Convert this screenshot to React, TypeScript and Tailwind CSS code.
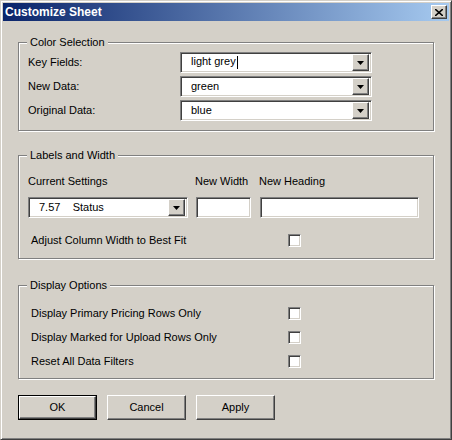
const font = { fontFamily: '"Liberation Sans", Arial, sans-serif' };

const sunken =
  "bg-white border border-t-[#808080] border-l-[#808080] border-b-white border-r-white shadow-[inset_1px_1px_0_#404040,inset_-1px_-1px_0_#d4d0c8]";
const raised =
  "bg-[#d4d0c8] border border-t-white border-l-white border-b-[#404040] border-r-[#404040] shadow-[inset_-1px_-1px_0_#808080]";

function Arrow() {
  return (
    <div className={`${raised} w-[17px] h-[17px] flex items-center justify-center shrink-0`}>
      <svg width="7" height="4" viewBox="0 0 7 4">
        <path d="M0 0h7L3.5 4z" fill="#000" />
      </svg>
    </div>
  );
}

function Combo({ value, width, caret }: { value: string; width: string; caret?: boolean }) {
  return (
    <div className={`${sunken} ${width} h-[21px] flex items-center pl-[10px] pr-[2px]`}>
      <span className="flex-1 text-[11px] text-black leading-none">
        {value}
        {caret && <span className="inline-block w-px h-[13px] bg-black align-middle ml-px" />}
      </span>
      <Arrow />
    </div>
  );
}

function Check() {
  return <div className={`${sunken} w-[13px] h-[13px]`} />;
}

function Group({ title, height, children }: { title: string; height: string; children: React.ReactNode }) {
  return (
    <div className={`relative ${height} border border-[#808080] shadow-[inset_1px_1px_0_#fff,1px_1px_0_#fff]`}>
      <span className="absolute left-[8px] -top-[8px] bg-[#d4d0c8] px-[3px] text-[11px] leading-[14px]">{title}</span>
      {children}
    </div>
  );
}

function Button({ label, def }: { label: string; def?: boolean }) {
  return (
    <div className={def ? "border border-black" : ""}>
      <div className={`${raised} ${def ? "w-[77px] h-[23px]" : "w-[79px] h-[25px]"} flex items-center justify-center text-[11px]`}>
        {label}
      </div>
    </div>
  );
}

export default function App() {
  return (
    <div
      style={font}
      className="w-[452px] h-[440px] bg-[#d4d0c8] text-black border border-t-[#d4d0c8] border-l-[#d4d0c8] border-b-[#404040] border-r-[#404040] shadow-[inset_1px_1px_0_#fff,inset_-1px_-1px_0_#808080] p-[2px] flex flex-col"
    >
      <div className="h-[18px] flex items-center justify-between bg-[linear-gradient(to_right,#0a246a,#a6caf0)] pl-[2px] pr-[2px]">
        <span className="text-white font-bold text-[12px]">Customize Sheet</span>
        <div className={`${raised} w-[16px] h-[14px] flex items-center justify-center`}>
          <svg width="8" height="7" viewBox="0 0 8 7">
            <path d="M0 0l8 7M8 0L0 7" stroke="#000" strokeWidth="1.6" />
          </svg>
        </div>
      </div>

      <div className="px-[15px] pt-[21px] flex flex-col">
        <Group title="Color Selection" height="h-[89px]">
          <div className="pt-[9px] pl-[9px] flex flex-col gap-[3px]">
            {[
              ["Key Fields:", "light grey", true],
              ["New Data:", "green", false],
              ["Original Data:", "blue", false],
            ].map(([l, v, c]) => (
              <div key={l as string} className="flex items-center h-[21px]">
                <span className="w-[152px] text-[11px]">{l}</span>
                <Combo value={v as string} width="w-[192px]" caret={c as boolean} />
              </div>
            ))}
          </div>
        </Group>

        <div className="h-[24px]" />
        <Group title="Labels and Width" height="h-[104px]">
          <div className="pt-[17px] pl-[9px] flex flex-col">
            <div className="flex text-[11px] h-[16px] items-center">
              <span className="w-[167px]">Current Settings</span>
              <span className="w-[64px]">New Width</span>
              <span>New Heading</span>
            </div>
            <div className="flex items-center gap-[8px] mt-[8px]">
              <div className={`${sunken} w-[160px] h-[21px] flex items-center pl-[10px] pr-[2px]`}>
                <span className="flex-1 text-[11px] leading-none whitespace-pre">7.57    Status</span>
                <Arrow />
              </div>
              <div className={`${sunken} w-[55px] h-[21px]`} />
              <div className={`${sunken} w-[159px] h-[21px] ml-[1px]`} />
            </div>
            <div className="flex items-center mt-[14px] pl-[3px]">
              <span className="w-[257px] text-[11px]">Adjust Column Width to Best Fit</span>
              <Check />
            </div>
          </div>
        </Group>

        <div className="h-[26px]" />
        <Group title="Display Options" height="h-[94px]">
          <div className="pt-[20px] pl-[12px] flex flex-col gap-[10px]">
            {["Display Primary Pricing Rows Only", "Display Marked for Upload Rows Only", "Reset All Data Filters"].map((t) => (
              <div key={t} className="flex items-center h-[14px]">
                <span className="w-[257px] text-[11px]">{t}</span>
                <Check />
              </div>
            ))}
          </div>
        </Group>

        <div className="flex gap-[10px] mt-[16px]">
          <Button label="OK" def />
          <Button label="Cancel" />
          <Button label="Apply" />
        </div>
      </div>
    </div>
  );
}
